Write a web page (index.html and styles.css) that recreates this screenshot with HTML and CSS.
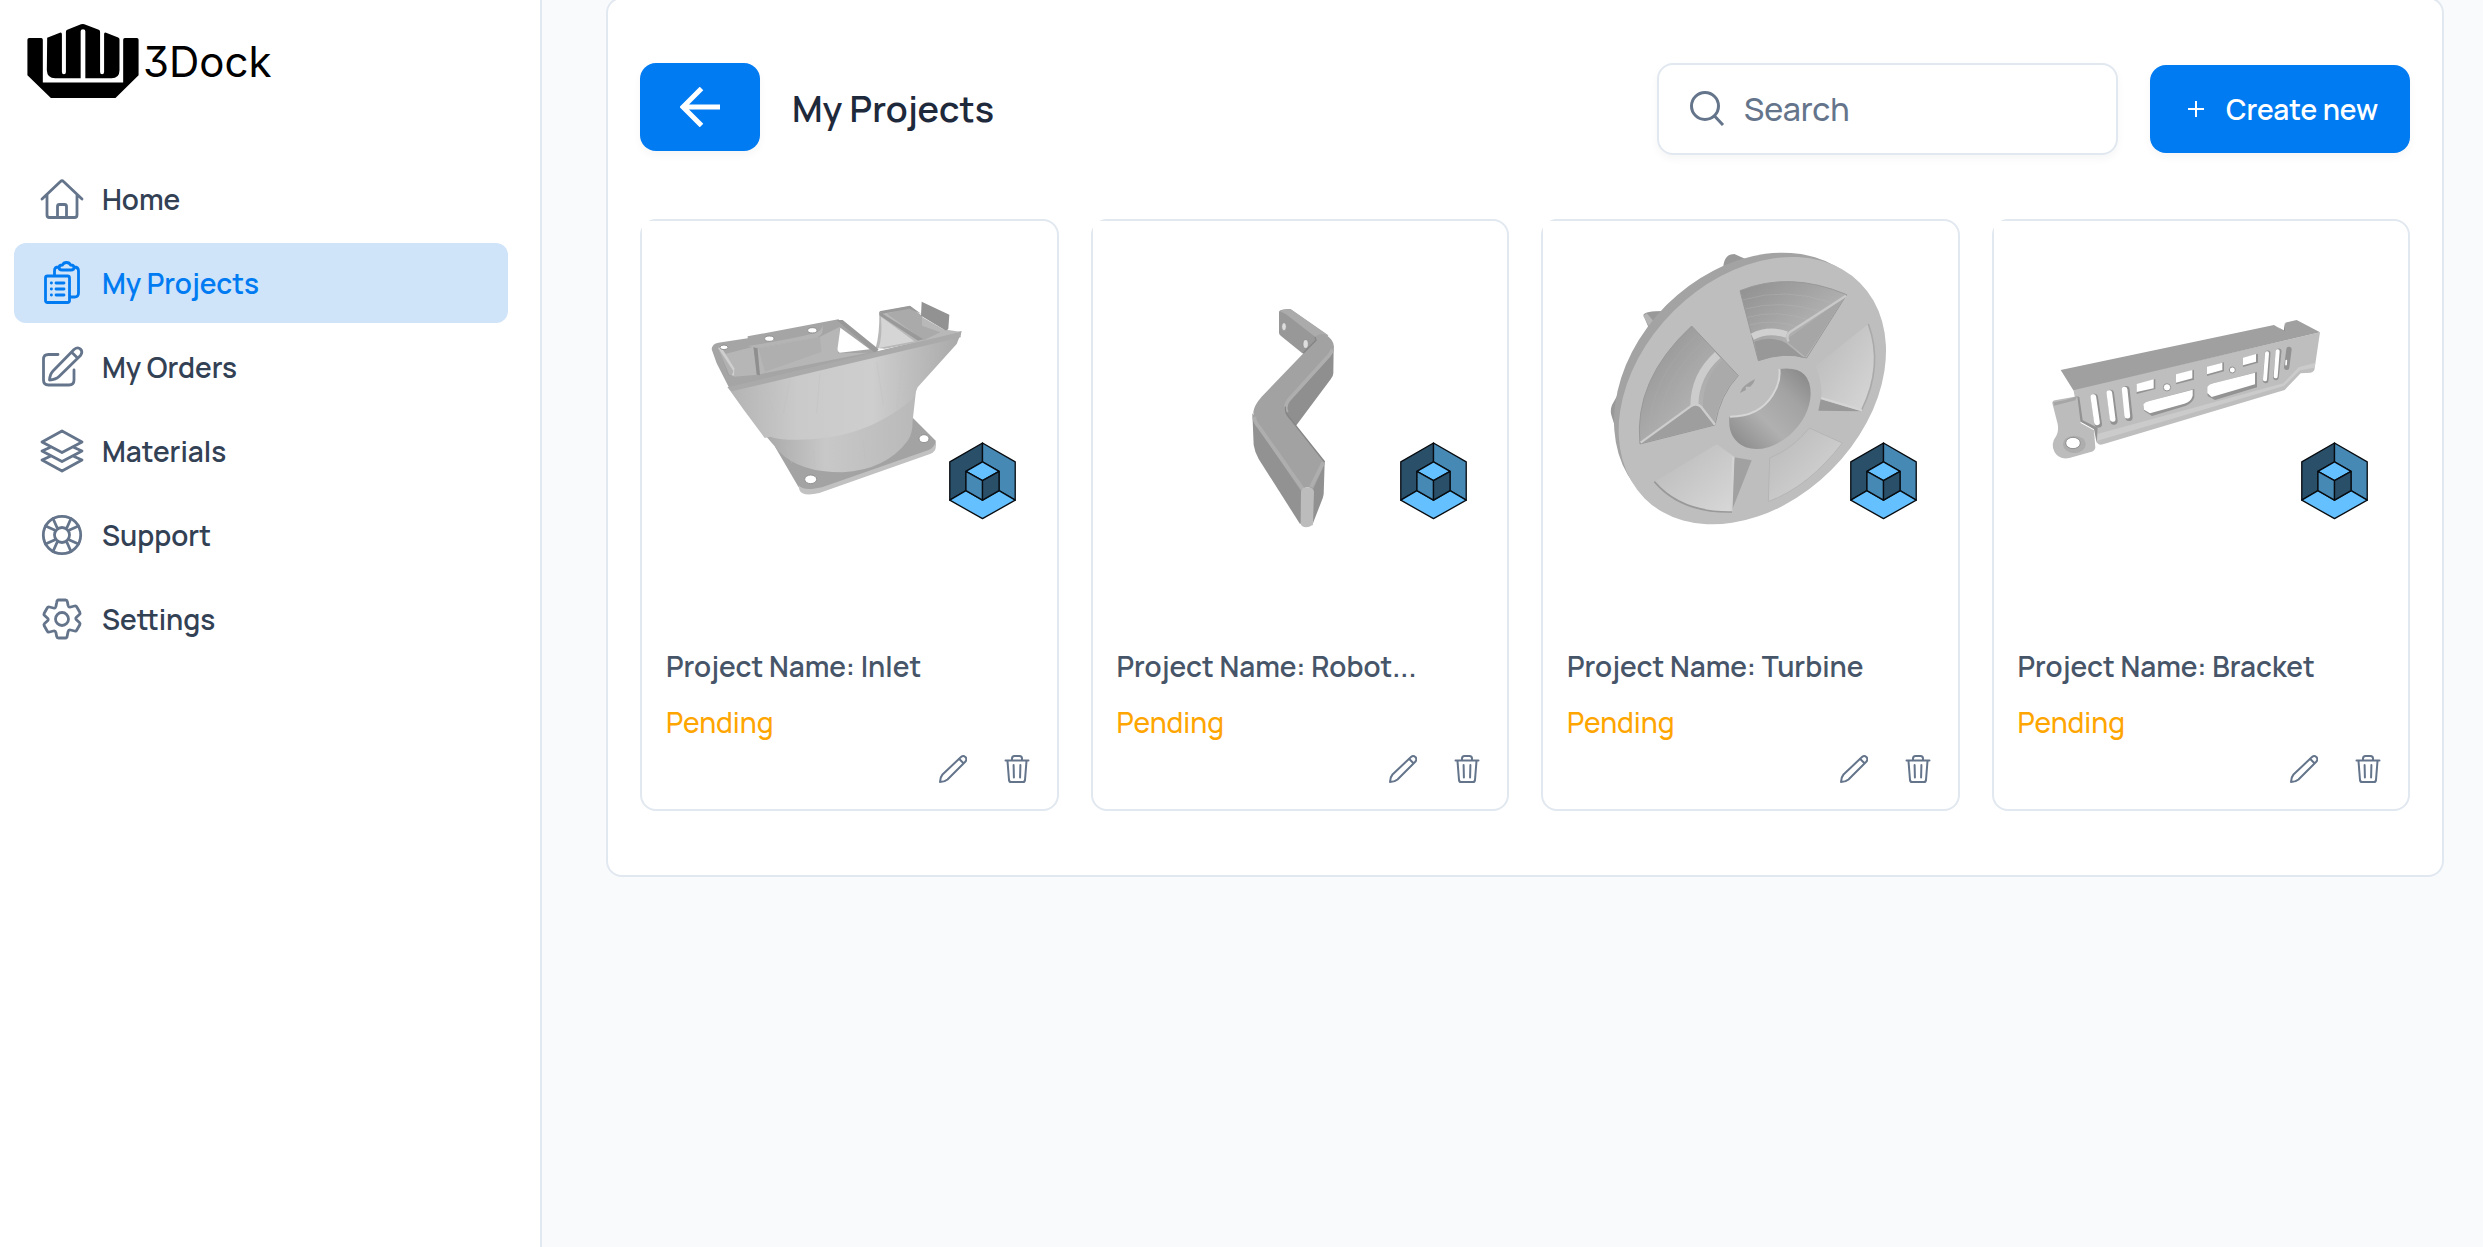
FILE: index.html
```
<!DOCTYPE html>
<html lang="en">
<head>
<meta charset="utf-8">
<meta name="viewport" content="width=device-width, initial-scale=1">
<title>3Dock – My Projects</title>
<link rel="stylesheet" href="styles.css">
</head>
<body>
<svg class="sprite" aria-hidden="true">
  <symbol id="cube" viewBox="0 0 206 236">
    <g stroke="#080c10" stroke-width="4" stroke-linejoin="round">
      <path fill="#2a4f69" d="M103 3 4 60v116l49-29V89l50-29z"/>
      <path fill="#4689b5" d="M103 3l99 57v116l-49-29V89l-50-29z"/>
      <path fill="#64c0ff" d="M4 176l49-29 50 29 50-29 49 29-99 56z"/>
      <path fill="#64c0ff" d="M103 60l50 29-50 28-50-28z"/>
      <path fill="#4689b5" d="M53 89l50 28v59l-50-29z"/>
      <path fill="#2a4f69" d="M153 89l-50 28v59l50-29z"/>
    </g>
  </symbol>
  <symbol id="pencil" viewBox="0 0 28 28">
    <path d="M1 27c0-3 .8-5.500 2.500-7.500L22 2c3-2.500 7 1 4.500 4.500L8.500 24.500C6.500 26.200 4 27 1 27zM20 3.800l4.500 4.500"/>
  </symbol>
  <symbol id="trash" viewBox="0 0 28 28">
    <path d="M2.500 5.500h23M4.500 6l1.500 19q.3 2 2 2h12q1.700 0 2-2L23.500 6M9 5V3.500Q9 1 11.500 1h5Q19 1 19 3.500V5M10.600 10l.3 12.500M17.400 10l-.3 12.500"/>
  </symbol>
  <linearGradient id="funnel" x1="0" x2="1" y1="0" y2="0">
    <stop offset="0" stop-color="#b3b3b3"/><stop offset=".3" stop-color="#cacaca"/><stop offset=".62" stop-color="#cecece"/><stop offset="1" stop-color="#a9a9a9"/>
  </linearGradient>
  <linearGradient id="neck" x1="0" x2="1" y1="0" y2="0">
    <stop offset="0" stop-color="#a9a9a9"/><stop offset=".4" stop-color="#c8c8c8"/><stop offset="1" stop-color="#b9b9b9"/>
  </linearGradient>
  <linearGradient id="bowl" x1="0" x2="1" y1="0" y2="1">
    <stop offset="0" stop-color="#8f8f8f"/><stop offset=".6" stop-color="#b0b0b0"/><stop offset="1" stop-color="#c4c4c4"/>
  </linearGradient>
  <linearGradient id="bowl-light" x1="0" x2="1" y1="0" y2="1">
    <stop offset="0" stop-color="#b8b8b8"/><stop offset="1" stop-color="#d8d8d8"/>
  </linearGradient>
  <linearGradient id="bore" x1="0" x2="1" y1="1" y2="0">
    <stop offset="0" stop-color="#858585"/><stop offset=".4" stop-color="#b0b0b0"/><stop offset=".7" stop-color="#a3a3a3"/><stop offset="1" stop-color="#848484"/>
  </linearGradient>
</svg>

<div class="app">
  <aside class="sidebar">
    <a class="brand" href="#">
      <svg class="brand-mark" viewBox="0 0 334 224" aria-hidden="true">
        <path d="M6 42h36q5 0 5 5v128h240V47q0-5 5-5h36q5 0 5 5v106l-69 68H71L1 153V47q0-5 5-5z"/>
        <path d="M60 41l38-15q6-2 6 5v112q0 7 6 7t6-7V23q0-4 4-6l41-16q6-2 10 0l43 16q4 2 4 6v120q0 7 6 7t6-7V30q0-6 6-4l36 14q4 2 4 6v92q0 24-24 24h-78V22q0-6-7-6t-7 6v140H84q-24 0-25-24z"/>
      </svg>
      <span>3Dock</span>
    </a>
    <nav class="menu">
      <a class="menu-item" href="#">
        <svg viewBox="0 0 44 44" aria-hidden="true"><path d="M2 22 20.500 4.500q1.500-1.500 3 0L42 22M7 18v20q0 2.500 2.500 2.500h25q2.500 0 2.500-2.500V18M17.500 40V29.500q0-2 2-2h5q2 0 2 2V40"/></svg>
        <span>Home</span>
      </a>
      <a class="menu-item is-active" href="#" aria-current="page">
        <svg viewBox="0 0 44 44" aria-hidden="true"><path d="M14.500 14v-4q0-4 4-4h1M34 6q4.500 0 4.500 4v22q0 4-4 4H31M22 9q-3 0-3-2.500T22.500 4q1-2.500 4-2.500t4 2.500Q34 4 34 6.500T31 9zM7.500 15h20q2 0 2 2v22.500q0 2-2 2h-20q-2 0-2-2V17q0-2 2-2zM11.300 22h.2M11.300 28h.2M11.300 34h.2M16 22h8M16 28h8M16 34h8"/></svg>
        <span>My Projects</span>
      </a>
      <a class="menu-item" href="#">
        <svg viewBox="0 0 44 44" aria-hidden="true"><path d="M18 9.500H8.500q-5 0-5 5V35q0 5 5 5H29q5 0 5-5V25M9.500 35q.5-6 3.500-9L34 4.500c5-4 10 1 6.500 6L19 31.500q-3 3-9.500 3.500zM31.500 7l6 6"/></svg>
        <span>My Orders</span>
      </a>
      <a class="menu-item" href="#">
        <svg viewBox="0 0 44 44" aria-hidden="true"><path d="M22 2l20 11-20 10.500L2 13zM11 18 2 22l20 10.500L42 22l-9-4M11 27l-9 4 20 11 20-11-9-4"/></svg>
        <span>Materials</span>
      </a>
      <a class="menu-item" href="#">
        <svg viewBox="0 0 44 44" aria-hidden="true"><circle cx="22" cy="22" r="18.700"/><circle cx="22" cy="22" r="7.500"/><path d="M13 5.500l4 9M5.500 13l9 4M31 5.500l-4 9M38.500 13l-9 4M13 38.500l4-9M5.500 31l9-4M31 38.500l-4-9M38.500 31l-9-4"/></svg>
        <span>Support</span>
      </a>
      <a class="menu-item" href="#">
        <svg viewBox="0 0 44 44" aria-hidden="true"><circle cx="22" cy="22" r="6.500"/><path d="M18.500 3h7q1.500 0 1.800 1.500l.8 4q.5 2 2.500 1.500l4-1q1.500-.4 2.200 1l3 5.200q.7 1.300-.4 2.300l-3 2.800q-1.200 1.200 0 2.400l3 2.800q1.100 1 .4 2.300l-3 5.200q-.7 1.400-2.200 1l-4-1q-2-.5-2.500 1.500l-.8 4Q27 41 25.500 41h-7q-1.500 0-1.800-1.500l-.8-4q-.5-2-2.500-1.500l-4 1q-1.500.4-2.200-1l-3-5.200q-.7-1.300.4-2.300l3-2.800q1.200-1.200 0-2.400l-3-2.800q-1.100-1-.4-2.300l3-5.200q.7-1.400 2.200-1l4 1q2 .5 2.500-1.500l.8-4Q17 3 18.500 3z"/></svg>
        <span>Settings</span>
      </a>
    </nav>
  </aside>

  <main class="main">
    <section class="panel">
      <header class="toolbar">
        <button class="button button-back" type="button" aria-label="Back">
          <svg viewBox="0 0 40 40" aria-hidden="true"><path d="M21.500 1.500 3 20l18.500 18.500M3 20h37"/></svg>
        </button>
        <h1>My Projects</h1>
        <label class="search">
          <svg viewBox="0 0 36 36" aria-hidden="true"><circle cx="15" cy="15" r="13.500"/><path d="M24.500 25l8.500 9"/></svg>
          <input type="search" placeholder="Search" aria-label="Search">
        </label>
        <button class="button button-create" type="button">
          <svg viewBox="0 0 16 16" aria-hidden="true"><path d="M8 0v16M0 8h16"/></svg>
          <span>Create new</span>
        </button>
      </header>

      <div class="cards">
        <article class="card">
          <svg class="preview" viewBox="0 0 400 400" role="img" aria-label="Inlet model">
            <g transform="translate(48 59) scale(.33333)">
              <path fill="#a3a3a3" d="M255 500 325 620q10 14 35 14 15 0 30-4l330-110q20-10 17-38l-72-72z"/>
              <path fill="#c1c1c1" d="M326 615q8 14 40 12l30-5 320-112q18-8 21-26v20q-2 12-17 18L388 639q-52 12-60-10z"/>
              <path fill="url(#neck)" d="M225 465l43 50q60 62 190 62 130-8 195-95 15-20 15-60l10-90z"/>
              <path fill="url(#funnel)" d="M115 325 812 162 800 192 683 322 670 355Q560 450 420 472 300 488 240 470L224 474 160 388z"/>
              <path fill="#a5a5a5" d="M65 208q2-18 20-20l88-13v-6l272-51 120 95 250-60-3 12L118 325 80 250z"/>
              <path fill="#b6b6b6" d="M105 222l85-22 14 84-72 6zM195 205l195-35 60-30-6 80 90-2L204 284z"/>
              <path fill="#afafaf" d="M205 205l185-35 5 45-170 60z"/>
              <path fill="#8f8f8f" d="M190 198l12 0 8 88-10-2z"/>
              <path fill="#fff" d="M451 143l88 65-90 10q-8-5-6-15z"/>
              <path fill="#b4b4b4" d="M173 198q130-20 200-38 25-8 25-28v20q0 16-25 22l-173 30z"/>
              <path fill="#cfcfcf" d="M84 203l10-1 39 63-1 22-14-2z"/>
              <path fill="#999" d="M84 203l46 70-5 15-10-2z" opacity=".55"/>
              <g fill="#fff" stroke="#909090" stroke-width="3"><ellipse cx="102" cy="202" rx="12" ry="7"/><ellipse cx="238" cy="176" rx="14" ry="8"/><ellipse cx="367" cy="151" rx="14" ry="8"/><ellipse cx="362" cy="598" rx="18" ry="13"/><ellipse cx="702" cy="476" rx="15" ry="12"/></g>
              <path fill="#b8b8b8" d="M568 96l92-18 40 35 60 35 55 8-115 28-20 4-95 18-28-2q12-40 11-108z"/>
              <path fill="#d5d5d5" d="M573 110l100 74-107 20q12-35 7-94z"/>
              <path fill="#aaa" d="M660 82l36 25v30l55 20-50 24-110-80z"/>
              <path fill="#999" d="M568 95l132 83-16 4-116-76zM568 94l92-17 34 25-36-16-80 15zM440 120l18 0 108 88-12 10z"/>
              <path fill="#929292" d="M695 65l83 39-3 42q-5 8-12 3l-70-42z"/>
              <path fill="#aaa" d="M112 322 812 156v16L125 334z"/>
              <path fill="none" stroke="#bdbdbd" stroke-width="2" opacity=".5" d="M220 320l30 70M300 300l-20 100M390 280l-10 120M560 245l20 130M640 225l-20 160M720 205l-80 140M290 500l15 50M370 510l5 50M520 480l5 60M600 430l-5 80"/>
            </g>
            <use href="#cube" x="306" y="221" width="69" height="78"/>
          </svg>
          <div class="card-body">
            <h2>Project Name: Inlet</h2>
            <p class="status">Pending</p>
            <div class="actions">
              <button type="button" aria-label="Edit"><svg><use href="#pencil"/></svg></button>
              <button type="button" aria-label="Delete"><svg><use href="#trash"/></svg></button>
            </div>
          </div>
        </article>

        <article class="card">
          <svg class="preview" viewBox="0 0 400 400" role="img" aria-label="Robot arm model">
            <g transform="translate(107 59) scale(.33333)">
              <path fill="#989898" d="M237 95q3-8 33-8l115 80-60 58-18-5-64-52q-6-5-6-10z"/>
              <path fill="#ababab" d="M240 94q10-8 33-6l112 78-35 8-93-72z"/>
              <g fill="#dedede" stroke="#8a8a8a" stroke-width="2"><ellipse cx="252" cy="140" rx="7" ry="12"/><ellipse cx="317" cy="192" rx="8" ry="13"/></g>
              <path fill="#8f8f8f" d="M401 205l-1 75q0 8-8 18L288 437l-40-40 10-30z"/>
              <path fill="#929292" d="M157 400l4 95q3 20 15 42l124 195 18-10V630z"/>
              <path fill="#919191" d="M374 548l-3 95q-2 12-7 22l-28 72-10-110z"/>
              <path fill="#a2a2a2" d="M160 395q3-20 25-45L345 184l2-14q5-8 25-8 28 14 30 38 0 15-14 28L262 370q-10 15-4 33l117 145-35 80q-20-15-37 5L162 425z"/>
              <path fill="none" stroke="#aeaeae" stroke-width="11" stroke-linejoin="round" d="M163 410q0 15 15 32l131 186M397 208q-3 12-17 26L266 360q-15 20-5 37M370 547l-37 74"/>
              <path fill="none" stroke="#858585" stroke-width="4" d="M310 219l38-38-3-10M256 380q-2 15 8 28l110 138"/>
              <path fill="#bcbcbc" d="M303 635q2-13 20-13t19 14l-3 95q-5 10-22 11-15-2-15-12z"/>
            </g>
            <use href="#cube" x="306" y="221" width="69" height="78"/>
          </svg>
          <div class="card-body">
            <h2>Project Name: Robot...</h2>
            <p class="status">Pending</p>
            <div class="actions">
              <button type="button" aria-label="Edit"><svg><use href="#pencil"/></svg></button>
              <button type="button" aria-label="Delete"><svg><use href="#trash"/></svg></button>
            </div>
          </div>
        </article>

        <article class="card">
          <svg class="preview" viewBox="0 0 400 400" role="img" aria-label="Turbine model">
            <g transform="translate(37 9) scale(.33333)">
              <path fill="#999" d="M430 110q3-38 33-38l45 20-50 35zM190 255q5-12 60-12l40 30-80 30zM118 485l-22 40q-6 15-2 30l14 45 20-30z"/>
              <path fill="#b5b5b5" d="M190 258l10-8 40 45-18 20z"/>
              <ellipse cx="504" cy="470" rx="451" ry="346" transform="rotate(-45 504 470)" fill="#a3a3a3"/>
              <ellipse cx="517" cy="482" rx="457" ry="336" transform="rotate(-45 517 482)" fill="#bebebe"/>
              <path fill="url(#bowl)" stroke="#999" stroke-width="3" d="M480 182q150-60 320 12L680 384q-65-20-145 8z"/>
              <path fill="none" stroke="#b9b9b9" stroke-width="2" opacity=".5" d="M488 210q130-40 265 8M495 237q110-30 225 8M502 262q90-25 185 8M508 285q70-20 145 6"/>
              <path fill="none" stroke="#d0d0d0" stroke-width="20" d="M517 320q50-25 103-6"/>
              <path fill="#989898" d="M523 335q50-20 95 4l55 45q-65-18-138 8z"/>
              <path fill="#a6a6a6" d="M795 200 677 382l-50-42q-6-16 10-24z"/>
              <path fill="none" stroke="#c9c9c9" stroke-width="7" stroke-linejoin="round" d="M798 197 630 306q-14 12-4 28"/>
              <path fill="url(#bowl)" stroke="#999" stroke-width="3" d="M335 288Q160 450 180 642l225-57q15-90 70-148z"/>
              <path fill="none" stroke="#afafaf" stroke-width="2" opacity=".5" d="M350 315q-140 130-142 290M370 335q-125 115-132 250M388 355q-105 95-115 205"/>
              <path fill="none" stroke="#ccc" stroke-width="24" d="M413 375q-68 60-70 150"/>
              <path fill="#aaa" d="M428 390l46 47q-56 56-70 143l-36-45q0-90 60-145z"/>
              <path fill="#9e9e9e" d="M182 640 335 527q15-8 28 3l42 54z"/>
              <path fill="none" stroke="#cdcdcd" stroke-width="7" stroke-linejoin="round" d="M182 638 335 527q15-8 28 3l42 54"/>
              <path fill="url(#bowl-light)" d="M865 282q48 120-20 262l-128-4 8-50q-2-45-18-82z"/>
              <path fill="none" stroke="#aaa" stroke-width="5" d="M865 282q46 125-20 258"/>
              <path fill="#999" d="M722 508l122 36-129-2z"/>
              <path fill="none" stroke="#d5d5d5" stroke-width="7" d="M724 504l121 36"/>
              <path fill="url(#bowl-light)" d="M410 643l50 35-4 168Q310 850 223 755z"/>
              <path fill="none" stroke="#999" stroke-width="5" d="M223 755q80 94 233 91"/>
              <path fill="#a1a1a1" d="M463 682l52 9-60 152z"/>
              <path fill="none" stroke="#d3d3d3" stroke-width="7" d="M460 680l-6 162"/>
              <path fill="url(#bowl-light)" stroke="#b5b5b5" stroke-width="3" d="M688 594l99 45q-100 130-222 176l4-131q70-28 119-90z"/>
              <path fill="url(#bore)" d="M598 417q94-12 94 75-3 70-65 125-70 55-130 35-55-25-49-92 90 0 130-65 25-40 20-78z"/>
              <path fill="none" stroke="#d6d6d6" stroke-width="6" d="M598 417q5 38-20 78-40 65-128 65"/>
              <path fill="#9e9e9e" d="M480 489q5-22 45-42-5 25-45 42z"/>
              <path fill="#bebebe" d="M497 470l16 0-5 10-10 5z"/>
            </g>
            <use href="#cube" x="306" y="221" width="69" height="78"/>
          </svg>
          <div class="card-body">
            <h2>Project Name: Turbine</h2>
            <p class="status">Pending</p>
            <div class="actions">
              <button type="button" aria-label="Edit"><svg><use href="#pencil"/></svg></button>
              <button type="button" aria-label="Delete"><svg><use href="#trash"/></svg></button>
            </div>
          </div>
        </article>

        <article class="card">
          <svg class="preview" viewBox="0 0 400 400" role="img" aria-label="Bracket model">
            <g transform="translate(26 69) scale(.33333)">
              <path fill="#bebebe" d="M160 298 900 127l-16 108q0 10-12 13l-30 2-48 50-545 163q-12 4-18-5l-6-38-48-30z"/>
              <path fill="#cbcbcb" d="M232 432 790 280l46-48 50-14-2 15-44 8-48 47L232 452z"/>
              <path fill="#a0a0a0" d="M122 240 762 105l30 18 4-25 34-8 70 37L160 301z"/>
              <path fill="#8a8a8a" d="M795 98v25l-22-12 18 13z"/>
              <path fill="#939393" d="M168 318l10 3 10 70 45 22-3 46-8-42-46-25z"/>
              <path fill="#bcbcbc" d="M97 340q0-8 8-9l67-12 10 80 40 22 4 52q-2 10-14 13l-64 18q-30 6-44-17-14-25 5-50 8-15 4-35z"/>
              <path fill="#a6a6a6" d="M100 337q35-4 72-18l-6 12-64 16z"/>
              <ellipse cx="163" cy="463" rx="34" ry="26" fill="#adadad"/>
              <ellipse cx="159" cy="459" rx="22" ry="17" fill="#fff" stroke="#8f8f8f" stroke-width="3"/>
              <g stroke-linecap="round" fill="none">
                <g stroke="#929292" stroke-width="22"><path d="M223 322l12 80M271 310l11 83M318 299l9 83"/><path d="M743 190l-6 81M776 184l-8 78" stroke-width="17"/><path d="M807 178l-7 54" stroke-width="16"/></g>
                <g stroke="#fff" stroke-width="17"><path d="M220 321l11 76M268 309l10 78M314 299l8 78"/><path d="M741 190l-6 78M773 184l-6 75" stroke-width="12"/><path d="M799 212l-1 12" stroke-width="5"/></g>
              </g>
              <path fill="#929292" d="M350 284l56-17v30l-56 15zM468 254l54-15v30l-54 14zM561 231l51-14v27l-51 14zM669 204l45-13v27l-45 13z"/>
              <path fill="#fff" d="M350 282l51-14v27l-51 11zM468 253l49-13v25l-49 13zM561 230l46-12v22l-46 13zM669 203l39-11v23l-39 11z"/>
              <path fill="#939393" d="M370 343q5-8 18-10l135-36v25q-5 17-25 25l-102 31-24-16z"/>
              <path fill="#fff" d="M370 343q5-8 18-10l130-34v18q-5 18-25 24l-103 29-18-11z"/>
              <path fill="#939393" d="M562 290q5-8 18-10l131-34v46l-126 38-22-12z"/>
              <path fill="#fff" d="M562 290q5-8 18-10l125-32v35l-130 38-13-12z"/>
              <g fill="#fff" stroke="#929292" stroke-width="3"><circle cx="441" cy="292" r="11"/><circle cx="637" cy="240" r="9"/></g>
            </g>
            <use href="#cube" x="306" y="221" width="69" height="78"/>
          </svg>
          <div class="card-body">
            <h2>Project Name: Bracket</h2>
            <p class="status">Pending</p>
            <div class="actions">
              <button type="button" aria-label="Edit"><svg><use href="#pencil"/></svg></button>
              <button type="button" aria-label="Delete"><svg><use href="#trash"/></svg></button>
            </div>
          </div>
        </article>
      </div>
    </section>
  </main>
</div>
</body>
</html>
```
FILE: styles.css
```
* {
  box-sizing: border-box;
}

body {
  margin: 0;
  background: #f8fafc;
  color: #334155;
  font-family: Manrope, Inter, "Liberation Sans", sans-serif;
  font-size: 28px;
  font-weight: 600;
  line-height: 40px;
}

h1,
h2,
p {
  margin: 0;
}

a {
  color: inherit;
  text-decoration: none;
}

button,
input {
  font: inherit;
}

svg {
  display: block;
  flex: none;
}

.sprite {
  position: absolute;
  width: 0;
  height: 0;
}

.app {
  display: flex;
  min-height: 100vh;
}

/* Sidebar */
.sidebar {
  flex: none;
  width: 542px;
  padding: 24px 32px 24px 14px;
  background: #fff;
  border-right: 2px solid #e2e8f0;
}

.brand {
  display: flex;
  align-items: center;
  gap: 4px;
  padding-left: 13px;
  color: #000;
  font-family: Inter, "Liberation Sans", sans-serif;
  font-feature-settings: "cv09";
  font-size: 42px;
  font-weight: 400;
  line-height: 72px;
}

.brand-mark {
  width: 112px;
  height: 75px;
}

.menu {
  display: flex;
  flex-direction: column;
  gap: 4px;
  margin-top: 60px;
}

.menu-item {
  display: flex;
  align-items: center;
  gap: 18px;
  height: 80px;
  padding: 0 26px;
  border-radius: 12px;
}

.menu-item svg {
  width: 44px;
  height: 44px;
  fill: none;
  stroke: #64748b;
  stroke-width: 2.8;
  stroke-linecap: round;
  stroke-linejoin: round;
}

.menu-item.is-active {
  background: #cfe3f9;
  color: #007bf2;
}

.menu-item.is-active svg {
  stroke: #007bf2;
}

/* Main panel */
.main {
  flex: 1;
  min-width: 0;
  padding: 0 39px 64px 64px;
}

.panel {
  margin-top: -3px;
  padding: 64px 32px;
  background: #fff;
  border: 2px solid #e2e8f0;
  border-radius: 16px;
}

.toolbar {
  display: flex;
  align-items: center;
  gap: 32px;
  margin-bottom: 64px;
}

.toolbar h1 {
  margin-right: auto;
  color: #1e293b;
  font-size: 36px;
  font-weight: 600;
}

.button {
  display: flex;
  align-items: center;
  justify-content: center;
  height: 88px;
  padding: 0;
  border: 0;
  border-radius: 16px;
  background: #007bf2;
  color: #fff;
  box-shadow: 0 4px 8px rgb(0 0 0 / 4%);
}

.button svg {
  fill: none;
  stroke: #fff;
}

.button-back {
  align-self: flex-start;
  width: 120px;
}

.button-back svg {
  width: 40px;
  height: 40px;
  stroke-width: 5;
}

.button-create {
  gap: 22px;
  width: 260px;
  padding-left: 6px;
}

.button-create svg {
  width: 16px;
  height: 16px;
  stroke-width: 2;
}

.search {
  display: flex;
  align-items: center;
  gap: 18px;
  width: 461px;
  height: 92px;
  padding: 0 31px;
  border: 2px solid #e2e8f0;
  border-radius: 16px;
  box-shadow: 0 4px 8px rgb(0 0 0 / 4%);
}

.search svg {
  width: 36px;
  height: 36px;
  fill: none;
  stroke: #64748b;
  stroke-width: 3;
}

.search input {
  flex: 1;
  min-width: 0;
  padding: 0;
  border: 0;
  outline: 0;
  background: none;
  color: #334155;
  font-size: 32px;
  font-weight: 500;
}

.search input::placeholder {
  color: #64748b;
  opacity: 1;
}

/* Project cards */
.cards {
  display: grid;
  grid-template-columns: repeat(4, minmax(0, 1fr));
  gap: 32px;
}

.card {
  border: 2px solid #e2e8f0;
  border-radius: 16px;
}

.preview {
  width: 400px;
  max-width: 100%;
  background: #fff;
}

.card-body {
  padding: 25px 26px 26px 24px;
}

.card h2 {
  margin-bottom: 16px;
  color: #475569;
  font-size: 28px;
  font-weight: 600;
}

.status {
  color: orange;
  font-weight: 500;
}

.actions {
  display: flex;
  justify-content: flex-end;
  gap: 36px;
  margin-top: 13px;
}

.actions button {
  padding: 0;
  border: 0;
  background: none;
}

.actions svg {
  width: 28px;
  height: 28px;
  fill: none;
  stroke: #64748b;
  stroke-width: 2;
  stroke-linecap: round;
  stroke-linejoin: round;
}
```
